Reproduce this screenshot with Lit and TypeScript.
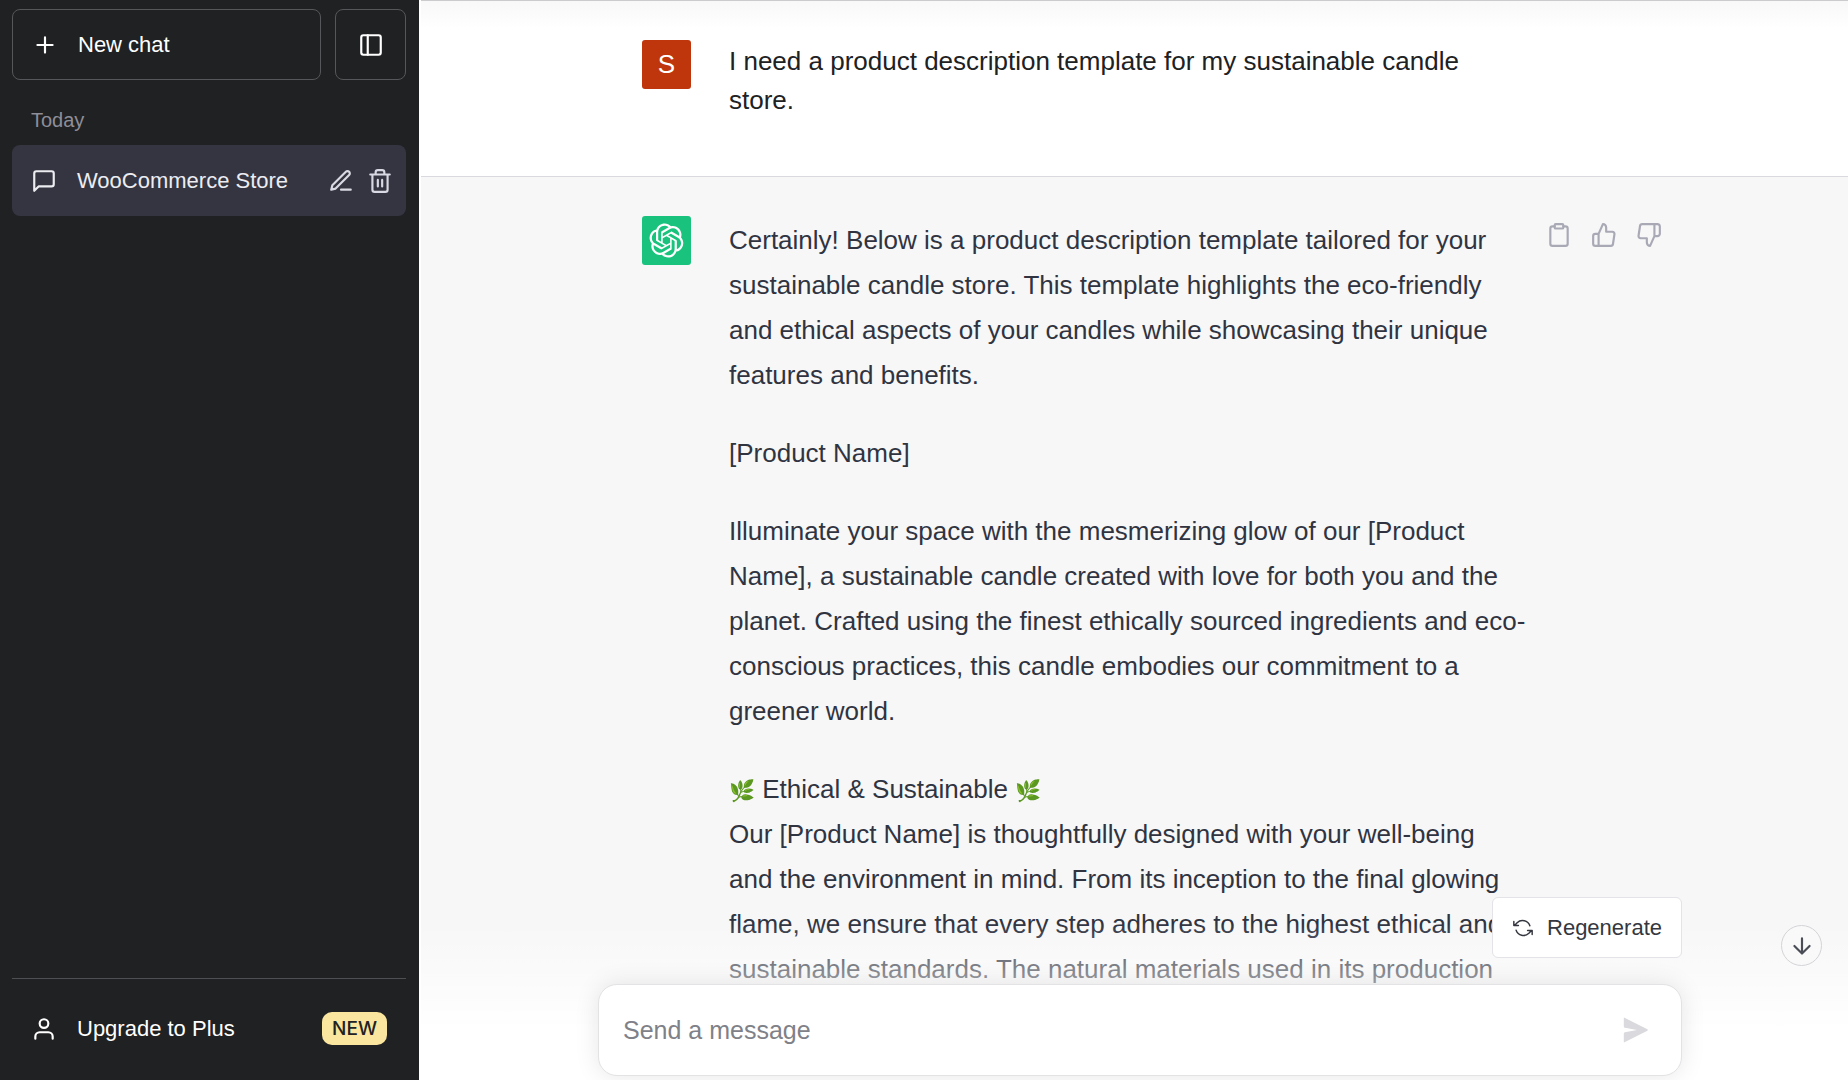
import { LitElement, html, css, svg, nothing } from "lit";
import { customElement, property } from "lit/decorators.js";

const icons: Record<string, unknown> = {
  plus: svg`<path d="M12 5v14M5 12h14"/>`,
  panel: svg`<rect x="3" y="3" width="18" height="18" rx="2"/><path d="M9 3v18"/>`,
  chat: svg`<path d="M21 15a2 2 0 0 1-2 2H7l-4 4V5a2 2 0 0 1 2-2h14a2 2 0 0 1 2 2z"/>`,
  pencil: svg`<path d="M12 20h9"/><path d="M16.5 3.5a2.121 2.121 0 0 1 3 3L7 19l-4 1 1-4L16.5 3.5z"/>`,
  trash: svg`<path d="M3 6h18M19 6v14a2 2 0 0 1-2 2H7a2 2 0 0 1-2-2V6M8 6V4a2 2 0 0 1 2-2h4a2 2 0 0 1 2 2v2M10 11v6M14 11v6"/>`,
  user: svg`<path d="M20 21v-2a4 4 0 0 0-4-4H8a4 4 0 0 0-4 4v2"/><circle cx="12" cy="7" r="4"/>`,
  clipboard: svg`<path d="M16 4h2a2 2 0 0 1 2 2v14a2 2 0 0 1-2 2H6a2 2 0 0 1-2-2V6a2 2 0 0 1 2-2h2"/><rect x="8" y="2" width="8" height="4" rx="1"/>`,
  up: svg`<path d="M14 9V5a3 3 0 0 0-3-3l-4 9v11h11.28a2 2 0 0 0 2-1.7l1.38-9a2 2 0 0 0-2-2.3zM7 22H4a2 2 0 0 1-2-2v-7a2 2 0 0 1 2-2h3"/>`,
  down: svg`<path d="M10 15v4a3 3 0 0 0 3 3l4-9V2H5.72a2 2 0 0 0-2 1.7l-1.38 9a2 2 0 0 0 2 2.3zM17 2h2.67A2.31 2.31 0 0 1 22 4v7a2.31 2.31 0 0 1-2.33 2H17"/>`,
  refresh: svg`<path d="M2 4.8v4.5h5M3 9l2.6-2.8A8.5 8.5 0 0 1 19.5 9.5M22 19.2v-4.5h-5M21 15l-2.6 2.8A8.5 8.5 0 0 1 4.5 14.5"/>`,
  arrow: svg`<path d="M12 5v14M19 12l-7 7-7-7"/>`,
};

@customElement("line-icon")
export class LineIcon extends LitElement {
  @property() name = "";

  static styles = css`
    :host { display: inline-flex; flex: none; }
    svg {
      width: var(--icon-size, 26px);
      height: var(--icon-size, 26px);
      fill: none;
      stroke: currentColor;
      stroke-width: var(--icon-stroke, 2);
      stroke-linecap: round;
      stroke-linejoin: round;
    }
  `;

  render() {
    return html`<svg viewBox="0 0 24 24" aria-hidden="true">${icons[this.name] ?? nothing}</svg>`;
  }
}

@customElement("chat-sidebar")
export class ChatSidebar extends LitElement {
  static styles = css`
    :host {
      display: flex;
      flex-direction: column;
      box-sizing: border-box;
      padding: 9px 13px 16px 12px;
      background: #202123;
      color: #fff;
      font-size: 22px;
      line-height: 32px;
    }
    button, a {
      font: inherit;
      color: inherit;
      text-decoration: none;
      background: none;
      border: 0;
      padding: 0;
      text-align: left;
      cursor: pointer;
    }
    .top { display: flex; gap: 14px; }
    .new, .toggle {
      display: flex;
      align-items: center;
      box-sizing: border-box;
      height: 71px;
      border: 1px solid #56575a;
      border-radius: 8px;
    }
    .new { flex: 1; gap: 20px; padding: 0 19px; }
    .toggle { width: 71px; justify-content: center; }
    .heading {
      margin: 24px 19px 9px;
      font-size: 20px;
      font-weight: 400;
      line-height: 32px;
      color: #8e8e99;
    }
    .item {
      display: flex;
      align-items: center;
      height: 71px;
      padding: 0 13px 0 19px;
      border-radius: 8px;
      background: #343541;
      color: #ececf1;
    }
    .item a { display: flex; align-items: center; gap: 20px; flex: 1; white-space: nowrap; }
    .tools { display: flex; gap: 13px; color: #d9d9e3; }
    .tools button { display: flex; }
    .spacer { flex: 1; }
    .footer { border-top: 1px solid #4d4f52; padding-top: 14px; }
    .upgrade { display: flex; align-items: center; gap: 20px; height: 71px; padding: 0 19px; }
    .label { flex: 1; }
    .badge {
      padding: 0 10px;
      border-radius: 10px;
      background: #fae69e;
      color: #202123;
      font-family: Inter, "Liberation Sans", sans-serif;
      font-size: 19px;
      font-weight: 500;
      line-height: 33px;
    }
  `;

  render() {
    return html`
      <div class="top">
        <button class="new"><line-icon name="plus"></line-icon>New chat</button>
        <button class="toggle" aria-label="Hide sidebar"><line-icon name="panel"></line-icon></button>
      </div>
      <h3 class="heading">Today</h3>
      <div class="item">
        <a href="#chat"><line-icon name="chat"></line-icon>WooCommerce Store</a>
        <div class="tools">
          <button aria-label="Rename"><line-icon name="pencil"></line-icon></button>
          <button aria-label="Delete"><line-icon name="trash"></line-icon></button>
        </div>
      </div>
      <div class="spacer"></div>
      <div class="footer">
        <a class="upgrade" href="#upgrade">
          <line-icon name="user"></line-icon>
          <span class="label">Upgrade to Plus</span>
          <span class="badge">NEW</span>
        </a>
      </div>
    `;
  }
}

@customElement("chat-message")
export class ChatMessage extends LitElement {
  @property() author: "user" | "assistant" = "user";

  static styles = css`
    :host { display: block; border-bottom: 1px solid #d9d9df; }
    :host([author="assistant"]) { background: #f7f7f8; }
    .pad { padding: 39px 0 56px 11px; }
    .row {
      display: grid;
      grid-template-columns: 49px minmax(0, 1fr) 113px;
      box-sizing: border-box;
      max-width: 1084px;
      margin: 0 auto;
      padding: 0 20px 0 44px;
    }
    .avatar {
      display: flex;
      align-items: center;
      justify-content: center;
      height: 49px;
      border-radius: 3px;
      background: #bf360c;
      color: #fff;
      font-size: 26px;
    }
    :host([author="assistant"]) .avatar { background: #19c37d; }
    .avatar svg { width: 35px; height: 35px; fill: currentColor; }
    .text { padding: 2px 22px 0 38px; color: #202123; line-height: 39px; }
    :host([author="assistant"]) .text { color: #303441; line-height: 45px; }
    .actions { display: flex; justify-content: space-between; height: 26px; padding-top: 6px; margin-left: -3px; color: #a9a9b6; }
    .actions button { display: flex; padding: 0; border: 0; background: none; color: inherit; cursor: pointer; }
  `;

  render() {
    const bot = this.author === "assistant";
    return html`
      <div class="pad">
        <div class="row">
          <div class="avatar">
            ${bot
              ? html`<svg viewBox="0 0 41 41" aria-hidden="true"><path d="M37.5324 16.8707C37.9808 15.5241 38.1363 14.0974 37.9886 12.6859C37.8409 11.2744 37.3934 9.91076 36.676 8.68622C35.6126 6.83404 33.9882 5.3676 32.0373 4.4985C30.0864 3.62941 27.9098 3.40259 25.8215 3.85078C24.8796 2.7893 23.7219 1.94125 22.4257 1.36341C21.1295 0.785575 19.7249 0.491269 18.3058 0.500197C16.1708 0.495044 14.0893 1.16803 12.3614 2.42214C10.6335 3.67624 9.34853 5.44666 8.6917 7.47815C7.30085 7.76286 5.98686 8.3414 4.8377 9.17505C3.68854 10.0087 2.73073 11.0782 2.02839 12.312C0.956464 14.1591 0.498905 16.2988 0.721698 18.4228C0.944492 20.5467 1.83612 22.5449 3.268 24.1293C2.81966 25.4759 2.66413 26.9026 2.81182 28.3141C2.95951 29.7256 3.40701 31.0892 4.12437 32.3138C5.18791 34.1659 6.8123 35.6322 8.76321 36.5013C10.7141 37.3704 12.8907 37.5973 14.9789 37.1492C15.9208 38.2107 17.0786 39.0587 18.3747 39.6366C19.6709 40.2144 21.0755 40.5087 22.4946 40.4998C24.6307 40.5054 26.7133 39.8321 28.4418 38.5772C30.1704 37.3223 31.4556 35.5506 32.1119 33.5179C33.5027 33.2332 34.8167 32.6547 35.9659 31.821C37.115 30.9874 38.0728 29.9178 38.7752 28.684C39.8458 26.8371 40.3023 24.6979 40.0789 22.5748C39.8556 20.4517 38.9639 18.4544 37.5324 16.8707ZM22.4978 37.8849C20.7443 37.8874 19.0459 37.2733 17.6994 36.1501C17.7601 36.117 17.8666 36.0586 17.936 36.0161L25.9004 31.4156C26.1003 31.3019 26.2663 31.137 26.3813 30.9378C26.4964 30.7386 26.5563 30.5124 26.5549 30.2825V19.0542L29.9213 20.998C29.9389 21.0068 29.9541 21.0198 29.9656 21.0359C29.977 21.052 29.9842 21.0707 29.9867 21.0902V30.3889C29.9842 32.375 29.1946 34.2791 27.7909 35.6841C26.3872 37.0892 24.4838 37.8806 22.4978 37.8849ZM6.39227 31.0064C5.51397 29.4888 5.19742 27.7107 5.49804 25.9832C5.55718 26.0187 5.66048 26.0818 5.73461 26.1244L13.699 30.7248C13.8975 30.8408 14.1233 30.902 14.3532 30.902C14.583 30.902 14.8088 30.8408 15.0073 30.7248L24.731 25.1103V28.9979C24.7321 29.0177 24.7283 29.0376 24.7199 29.0556C24.7115 29.0736 24.6988 29.0893 24.6829 29.1012L16.6317 33.7497C14.9096 34.7416 12.8643 35.0097 10.9447 34.4954C9.02506 33.9811 7.38785 32.7263 6.39227 31.0064ZM4.29707 13.6194C5.17156 12.0998 6.55279 10.9364 8.19885 10.3327C8.19885 10.4013 8.19491 10.5228 8.19491 10.6071V19.808C8.19351 20.0378 8.25334 20.2638 8.36823 20.4629C8.48312 20.6619 8.64893 20.8267 8.84863 20.9404L18.5723 26.5542L15.206 28.4979C15.1894 28.5089 15.1703 28.5155 15.1505 28.5173C15.1307 28.5191 15.1107 28.516 15.0924 28.5082L7.04046 23.8557C5.32135 22.8601 4.06716 21.2235 3.55289 19.3046C3.03862 17.3858 3.30624 15.3413 4.29707 13.6194ZM31.955 20.0556L22.2312 14.4411L25.5976 12.4981C25.6142 12.4872 25.6333 12.4805 25.6531 12.4787C25.6729 12.4769 25.6928 12.4801 25.7111 12.4879L33.7631 17.1364C34.9967 17.849 36.0017 18.8982 36.6606 20.1613C37.3194 21.4244 37.6047 22.849 37.4832 24.2684C37.3617 25.6878 36.8382 27.0432 35.9743 28.1759C35.1103 29.3086 33.9415 30.1717 32.6047 30.6641C32.6047 30.5947 32.6047 30.4733 32.6047 30.3889V21.188C32.6066 20.9586 32.5474 20.7328 32.4332 20.5338C32.319 20.3348 32.154 20.1698 31.955 20.0556ZM35.3055 15.0128C35.2464 14.9765 35.1431 14.9142 35.069 14.8717L27.1045 10.2712C26.906 10.1554 26.6803 10.0943 26.4504 10.0943C26.2206 10.0943 25.9948 10.1554 25.7963 10.2712L16.0726 15.8858V11.9982C16.0715 11.9783 16.0753 11.9585 16.0837 11.9405C16.0921 11.9225 16.1048 11.9068 16.1207 11.8949L24.1719 7.25025C25.4053 6.53903 26.8158 6.19376 28.2383 6.25482C29.6608 6.31589 31.0364 6.78077 32.2044 7.59508C33.3723 8.40939 34.2842 9.53945 34.8334 10.8531C35.3826 12.1667 35.5464 13.6095 35.3055 15.0128ZM14.2424 21.9419L10.8752 19.9981C10.8576 19.9893 10.8423 19.9763 10.8309 19.9602C10.8195 19.9441 10.8122 19.9254 10.8098 19.9058V10.6071C10.8107 9.18295 11.2173 7.78848 11.9819 6.58696C12.7466 5.38544 13.8377 4.42659 15.1275 3.82264C16.4173 3.21869 17.8524 2.99464 19.2649 3.1767C20.6775 3.35876 22.0089 3.93941 23.1034 4.85067C23.0427 4.88379 22.937 4.94215 22.8668 4.98473L14.9024 9.58517C14.7025 9.69878 14.5366 9.86356 14.4215 10.0626C14.3065 10.2616 14.2466 10.4877 14.2479 10.7175L14.2424 21.9419ZM16.071 17.9991L20.4018 15.4978L24.7325 17.9975V22.9985L20.4018 25.4983L16.071 22.9985V17.9991Z"/></svg>`
              : "S"}
          </div>
          <div class="text"><slot></slot></div>
          ${bot
            ? html`<div class="actions">
                <button aria-label="Copy"><line-icon name="clipboard"></line-icon></button>
                <button aria-label="Good response"><line-icon name="up"></line-icon></button>
                <button aria-label="Bad response"><line-icon name="down"></line-icon></button>
              </div>`
            : nothing}
        </div>
      </div>
    `;
  }
}

@customElement("message-composer")
export class MessageComposer extends LitElement {
  static styles = css`
    :host { display: block; }
    form {
      display: flex;
      align-items: center;
      box-sizing: border-box;
      height: 92px;
      padding: 0 32px 0 24px;
      border: 1px solid #e3e3e6;
      border-radius: 19px;
      background: #fff;
      box-shadow: 0 0 24px rgba(0, 0, 0, 0.1);
    }
    input {
      flex: 1;
      min-width: 0;
      padding: 0;
      border: 0;
      outline: 0;
      background: none;
      font: inherit;
      font-size: 25px;
      color: #303441;
    }
    input::placeholder { color: #7f8188; opacity: 1; }
    button { display: flex; padding: 0; border: 0; background: none; color: #d9d9de; cursor: pointer; }
    svg { width: 26px; height: 26px; fill: currentColor; }
  `;

  render() {
    return html`
      <form @submit=${(e: Event) => e.preventDefault()}>
        <input type="text" aria-label="Message" placeholder="Send a message" />
        <button aria-label="Send">
          <svg viewBox="0 0 16 16" aria-hidden="true"><path d="M.5.6Q.5.2.9.4L15 7.6q.6.4 0 .8L.9 15.6Q.5 15.8.5 15.4V10.2Q.5 9.5 1.2 9.4L8.7 8 1.2 6.6Q.5 6.5.5 5.8Z"/></svg>
        </button>
      </form>
    `;
  }
}

@customElement("app-root")
export class AppRoot extends LitElement {
  static styles = css`
    :host {
      display: grid;
      grid-template-columns: 419px minmax(0, 1fr);
      height: 100vh;
      overflow: hidden;
      background: #fff;
      font-family: "Liberation Sans", Arial, sans-serif;
      font-size: 26px;
    }
    main {
      position: relative;
      min-width: 0;
      overflow: hidden;
      padding-left: 2px;
    }
    .thread {
      border-top: 1px solid #cbcbcd;
      background: linear-gradient(#f8f8f8, #fff 28px);
    }
    p { margin: 0; }
    p + p { margin-top: 33px; }
    .emoji { font-size: 21px; line-height: 1; }
    .dock {
      position: absolute;
      left: 2px;
      right: 0;
      bottom: 0;
      padding: 60px 0 4px 11px;
      background: linear-gradient(rgba(255, 255, 255, 0), rgba(255, 255, 255, 0.5) 36%, #fff 68%);
    }
    .inner { position: relative; max-width: 1084px; margin: 0 auto; }
    .regen {
      position: absolute;
      right: 0;
      bottom: 118px;
      display: flex;
      align-items: center;
      gap: 13px;
      height: 61px;
      padding: 0 19px;
      border: 1px solid #e3e3e8;
      border-radius: 6px;
      background: #fff;
      color: #353740;
      font: inherit;
      font-size: 22px;
      cursor: pointer;
      --icon-size: 22px;
      --icon-stroke: 1.6;
    }
    .down {
      position: absolute;
      right: 26px;
      bottom: 114px;
      display: flex;
      align-items: center;
      justify-content: center;
      width: 41px;
      height: 41px;
      padding: 0;
      border: 1px solid #d4d4d8;
      border-radius: 50%;
      background: #f9f9fa;
      color: #4a4c56;
      cursor: pointer;
    }
  `;

  render() {
    return html`
      <chat-sidebar></chat-sidebar>
      <main>
        <div class="thread">
          <chat-message author="user">
            <p>I need a product description template for my sustainable candle store.</p>
          </chat-message>
          <chat-message author="assistant">
            <p>Certainly! Below is a product description template tailored for your sustainable candle store. This template highlights the eco-friendly and ethical aspects of your candles while showcasing their unique features and benefits.</p>
            <p>[Product Name]</p>
            <p>Illuminate your space with the mesmerizing glow of our [Product Name], a sustainable candle created with love for both you and the planet. Crafted using the finest ethically sourced ingredients and eco-conscious practices, this candle embodies our commitment to a greener world.</p>
            <p><span class="emoji">🌿</span> Ethical &amp; Sustainable <span class="emoji">🌿</span><br />Our [Product Name] is thoughtfully designed with your well-being<br />and the environment in mind. From its inception to the final glowing flame, we ensure that every step adheres to the highest ethical and sustainable standards. The natural materials used in its production</p>
          </chat-message>
        </div>
        <div class="dock">
          <div class="inner">
            <message-composer></message-composer>
            <button class="regen"><line-icon name="refresh"></line-icon>Regenerate</button>
          </div>
          <button class="down" aria-label="Scroll to bottom"><line-icon name="arrow"></line-icon></button>
        </div>
      </main>
    `;
  }
}
